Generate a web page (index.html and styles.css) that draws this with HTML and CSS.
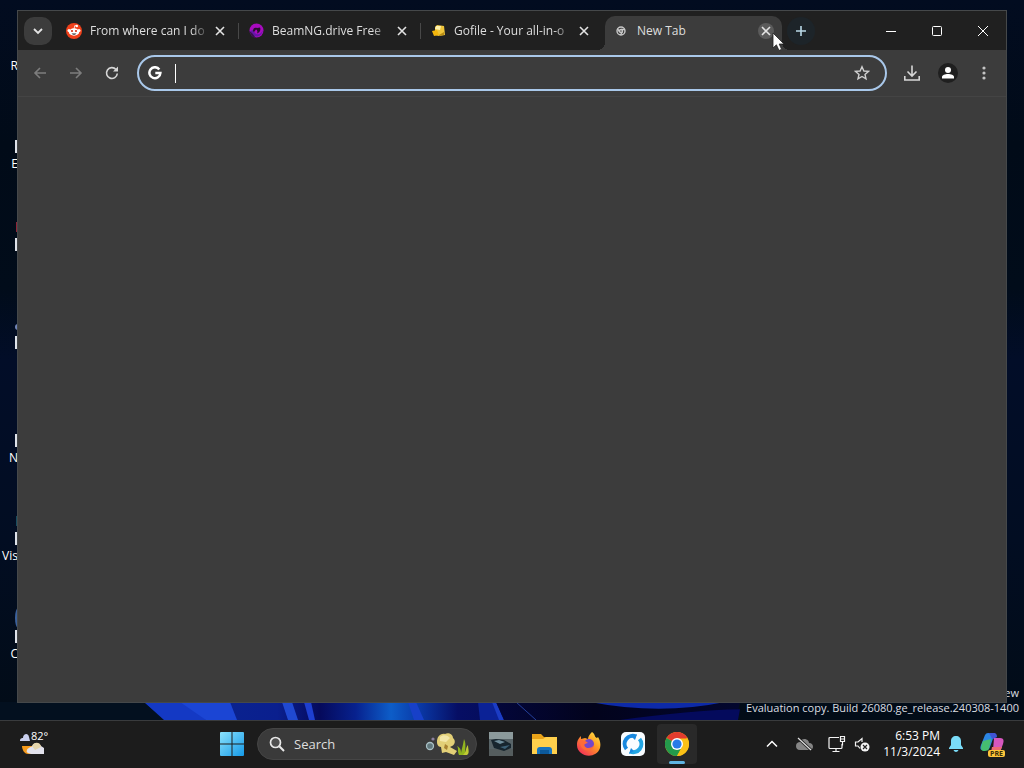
FILE: index.html
```
<!DOCTYPE html>
<html lang="en">
<head>
<meta charset="UTF-8">
<title>New Tab</title>
<meta name="viewport" content="width=device-width, initial-scale=1.0">
<link rel="stylesheet" href="styles.css">
</head>
<body>
<main class="desktop">
  <!-- Wallpaper bloom -->
  <svg class="wallpaper" viewBox="0 0 1024 20" preserveAspectRatio="none" aria-hidden="true">
    <defs>
      <linearGradient id="bloom" gradientUnits="userSpaceOnUse" x1="144" x2="536" y1="0" y2="0">
        <stop offset="0" stop-color="#0a2790"/>
        <stop offset=".34" stop-color="#0a1f8e"/>
        <stop offset=".45" stop-color="#050a5c"/>
        <stop offset=".54" stop-color="#07218e"/>
        <stop offset=".63" stop-color="#0d5dc8"/>
        <stop offset=".7" stop-color="#0a3aa8"/>
        <stop offset=".8" stop-color="#060e64"/>
        <stop offset="1" stop-color="#040a50"/>
      </linearGradient>
      <linearGradient id="petal">
        <stop offset="0" stop-color="#03063a"/>
        <stop offset=".4" stop-color="#02031c"/>
        <stop offset="1" stop-color="#02062e"/>
      </linearGradient>
    </defs>
    <path d="M0 0H146L166 20H0z" fill="#03101f"/>
    <path d="M144 0H520L536 20H166z" fill="url(#bloom)"/>
    <path d="M144 0H182L200 10L206 20H164z" fill="#1439c4"/>
    <path d="M180 0H230L237 20H206z" fill="#1b45d4"/>
    <path d="M282 0H292L298 20H288z" fill="#2049d2"/>
    <path d="M304 0H311L315 20H309z" fill="#1e3fd0"/>
    <path d="M408 0H416L424 20H414z" fill="#1740c8"/>
    <path d="M478 0H494L502 20H480z" fill="#0b2296"/>
    <path d="M492 0H496L504 20H499z" fill="#1b3cc4"/>
    <path d="M496 0H740L736 20H504z" fill="url(#petal)"/>
    <path d="M516 0L536 20" stroke="#2743a0" fill="none"/>
    <path d="M590 0H725Q660 15 590 0z" fill="#0d2aa8"/>
    <path d="M620 20Q690 9 740 8L738 20z" fill="#040a5c"/>
  </svg>

  <!-- Desktop shortcuts -->
  <ul class="shortcuts">
    <li><i></i><span>R</span></li>
    <li><i></i><span>E</span></li>
    <li class="red"><i></i></li>
    <li class="blue"><i></i></li>
    <li><i></i><span>N</span></li>
    <li class="teal"><i></i><span>Vis</span></li>
    <li class="disc"><i></i><span>C</span></li>
  </ul>

  <p class="watermark">ew<br>Evaluation copy. Build 26080.ge_release.240308-1400</p>

  <!-- Browser window -->
  <section class="window" aria-label="Browser">
    <header class="tabstrip">
      <button class="tab-search" aria-label="Search tabs">
        <svg width="12" height="12" viewBox="0 0 12 12"><path d="M2 4l4 4 4-4" fill="none" stroke="#e3e3e3" stroke-width="1.800"/></svg>
      </button>
      <div class="tabs">
        <div class="tab">
          <svg width="16" height="16" viewBox="0 0 16 16"><circle cx="8" cy="8" r="8" fill="#f0401a"/><circle cx="3" cy="7.500" r="1.500" fill="#fff"/><circle cx="13" cy="7.500" r="1.500" fill="#fff"/><circle cx="10.800" cy="3" r="1.200" fill="#fff"/><path d="M8 6l.8-3.400 2 .4" stroke="#fff" fill="none" stroke-width=".8"/><ellipse cx="8" cy="9" rx="5.200" ry="3.700" fill="#fff"/><circle cx="6" cy="8" r="1.100" fill="#d73012"/><circle cx="10" cy="8" r="1.100" fill="#d73012"/><path d="M5.500 10.400h5Q8 13 5.500 10.400z" fill="#222"/></svg>
          <a href="#reddit" class="fade">From where can I do</a>
          <button class="close" aria-label="Close tab"><svg width="10" height="10" viewBox="0 0 10 10"><path d="M1 1l8 8M9 1L1 9"/></svg></button>
        </div>
        <div class="tab">
          <svg width="16" height="16" viewBox="0 0 16 16"><circle cx="8.500" cy="7.500" r="7" fill="#a80bc0"/><path d="M2 8c0 6 11 9 13-1-1 3-5 6-8 3l-2-3z" fill="#6616a8"/><path d="M5 8C5 5 7 4 9 5l3-.5c1 2 0 5-3 6 1-2 0-4-1-4L6 9z" fill="#25102c"/><path d="M1 8l3 2 4 5-4-1z" fill="#38124e"/></svg>
          <a href="#beamng" class="fade">BeamNG.drive Free</a>
          <button class="close" aria-label="Close tab"><svg width="10" height="10" viewBox="0 0 10 10"><path d="M1 1l8 8M9 1L1 9"/></svg></button>
        </div>
        <div class="tab">
          <svg width="16" height="16" viewBox="0 0 16 16"><path d="M5 4l2-2 7 1 1 9-6 1-4-1z" fill="#efc53a"/><path d="M6 3h5l-1 4-5-1z" fill="#fff2ae"/><path d="M2 8l5-1 2 5-5 1z" fill="#f4b60c"/><path d="M9 12l5-3v3l-5 1z" fill="#b88c14"/></svg>
          <a href="#gofile" class="fade">Gofile - Your all-in-o</a>
          <button class="close" aria-label="Close tab"><svg width="10" height="10" viewBox="0 0 10 10"><path d="M1 1l8 8M9 1L1 9"/></svg></button>
        </div>
        <div class="tab active">
          <svg width="16" height="16" viewBox="0 0 16 16"><g fill="none" stroke="#c9c9c9" stroke-width="1.400"><circle cx="8" cy="8" r="4"/><circle cx="8" cy="8" r="1.500"/><path d="M8 6.500h4M6.500 9L4.500 5.500M9.300 9L7.500 12"/></g></svg>
          <a href="#newtab">New Tab</a>
          <button class="close" aria-label="Close tab"><svg width="10" height="10" viewBox="0 0 10 10"><path d="M1 1l8 8M9 1L1 9"/></svg></button>
        </div>
      </div>
      <button class="new-tab" aria-label="New tab"><svg width="12" height="12" viewBox="0 0 12 12"><path d="M6 1v10M1 6h10" stroke="#b9d8e6" stroke-width="1.600"/></svg></button>
      <div class="caption">
        <button aria-label="Minimize"><svg width="12" height="12" viewBox="0 0 12 12"><path d="M1 6.500h10"/></svg></button>
        <button aria-label="Maximize"><svg width="12" height="12" viewBox="0 0 12 12"><rect x="1.500" y="1.500" width="9" height="9" rx="1"/></svg></button>
        <button aria-label="Close"><svg width="12" height="12" viewBox="0 0 12 12"><path d="M1 1l10 10M11 1L1 11"/></svg></button>
      </div>
    </header>

    <div class="toolbar">
      <button class="tool dim" aria-label="Back"><svg width="16" height="16" viewBox="0 0 16 16"><path d="M14 8H3M8 3L3 8l5 5"/></svg></button>
      <button class="tool dim" aria-label="Forward"><svg width="16" height="16" viewBox="0 0 16 16"><path d="M2 8h11M8 3l5 5-5 5"/></svg></button>
      <button class="tool" aria-label="Reload"><svg width="16" height="16" viewBox="0 0 16 16"><path d="M13.300 8.500A5.400 5.400 0 1 1 12 4.500"/><path d="M14 1.500v5H9z" fill="#d6d6d6" stroke="none"/></svg></button>
      <div class="omnibox">
        <svg width="14" height="14" viewBox="0 0 14 14" aria-hidden="true"><path d="M11.300 3.400A5.500 5.500 0 1 0 12.400 7H7.300" fill="none" stroke="#fff" stroke-width="2.500"/></svg>
        <span class="caret"></span>
        <input type="text" aria-label="Address and search bar">
        <button class="star" aria-label="Bookmark this tab"><svg width="16" height="16" viewBox="0 0 16 16"><path d="M8 1.800l1.900 4.200 4.500.4-3.400 3 1 4.500L8 11.500l-4 2.400 1-4.500-3.400-3L6.100 6z" fill="none" stroke="#d0d0d0" stroke-width="1.400"/></svg></button>
      </div>
      <button class="tool" aria-label="Downloads"><svg width="18" height="18" viewBox="0 0 18 18"><path d="M9 1.500v10M4.500 7.500L9 12l4.500-4.500M1.800 12v4h14.400v-4"/></svg></button>
      <button class="tool" aria-label="Profile"><svg width="20" height="20" viewBox="0 0 20 20"><circle cx="10" cy="10" r="10" fill="#1f1f1f" stroke="none"/><circle cx="10" cy="7" r="3" fill="#fff" stroke="none"/><path d="M4 15.500v-1.500c0-4 12-4 12 0v1.500z" fill="#fff" stroke="none"/></svg></button>
      <button class="tool" aria-label="Menu"><svg width="16" height="16" viewBox="0 0 16 16"><g fill="#c4c4c4" stroke="none"><circle cx="8" cy="3" r="1.600"/><circle cx="8" cy="8" r="1.600"/><circle cx="8" cy="13" r="1.600"/></g></svg></button>
    </div>
    <div class="page"></div>
  </section>

  <svg class="pointer" width="13" height="20" viewBox="0 0 13 20" aria-hidden="true"><path d="M1 1v15l3.400-3.200L7 18.500l2.600-1.200L7.200 12H12z" fill="#fff" stroke="#222" stroke-width=".8"/></svg>
</main>

<footer class="taskbar">
  <button class="weather" aria-label="Weather">
    <svg width="28" height="26" viewBox="0 0 28 26"><path d="M0 10c0-3 2-3 3-3 0-4 5-6 6-1l1 4z" fill="#c9cfee"/><path d="M2 15h11l3 8H8c-4 0-6-5-6-8z" fill="#f59a1c"/><path d="M7 19c1-3 4-2 6-5 1-3 7-2 8 1l3 2v6H11c-4-1-5-2-4-4z" fill="#e2e2ec"/><path d="M12 15c2-5 9-4 9 1l-6 3z" fill="#e5d5ab"/></svg>
    <span>82°</span>
  </button>

  <nav class="apps">
    <button class="app" aria-label="Start"><svg width="24" height="24" viewBox="0 0 24 24"><defs><linearGradient id="win" x2="1" y2="1"><stop stop-color="#8be2fc"/><stop offset="1" stop-color="#159ae8"/></linearGradient></defs><path d="M0 1q0-1 1-1h10.500v11.500H0zM12.500 0H23q1 0 1 1v10.500H12.500zM0 12.500h11.500V24H1q-1 0-1-1zM12.500 12.500H24V23q0 1-1 1H12.500z" fill="url(#win)"/></svg></button>
    <label class="search">
      <svg width="16" height="16" viewBox="0 0 16 16"><circle cx="6.500" cy="6.500" r="5" fill="#505050" stroke="#e8e8e8" stroke-width="1.700"/><path d="M10.300 10.300L15 15" stroke="#e8e8e8" stroke-width="2"/></svg>
      <input type="search" placeholder="Search" aria-label="Search">
      <svg width="44" height="28" viewBox="0 0 44 28"><circle cx="5" cy="16" r="3.500" fill="#60777c" stroke="#a9c0c5" stroke-width="1.300"/><circle cx="8" cy="9" r="1.600" fill="#8a7f9d"/><path d="M12 12c0-5 3-9 8-8 3-2 8 0 8 4 3 2 2 7-1 8l-2 1 7 4-3 4-8-3-4 1-1-6c-3 0-4-3-4-5z" fill="#e2cf77"/><path d="M15 7c3-3 8-2 10 1l-4 4-6-1z" fill="#f3e7a8"/><path d="M20 14l3 2-1 4-3-2z" fill="#a78232"/><path d="M34 25c-2-4 0-6-2-9 4 2 4 5 4 7 1-5 2-8 3-14 3 6 0 11 2 16z" fill="#91b51e"/><path d="M38 25c4-3 2-7 5-10 0 4 2 8-1 10z" fill="#c0cc33"/></svg>
    </label>
    <button class="app" aria-label="Game"><svg width="24" height="24" viewBox="0 0 24 24"><path d="M0 0h24v24H0z" fill="#586468"/><path d="M0 0h24v7H0z" fill="#8b999b"/><path d="M0 17h24v7H0z" fill="#555d5e"/><path d="M2 8l5-1 8 1 7 4v4l-7 3-10-3z" fill="#17252e"/><path d="M5 9l5-1 6 2-5 2z" fill="#6f8d9b"/><path d="M11 15l10-2-5 4z" fill="#3c6076"/></svg></button>
    <button class="app" aria-label="File Explorer"><svg width="26" height="24" viewBox="0 0 26 24"><path d="M0 2h9l3 3h13v17H0z" fill="#e9a319"/><path d="M0 7h11l3-2h11v17H0z" fill="#ffd04c"/><path d="M5 22v-4q0-3 3-3h9q3 0 3 3v4z" fill="#1774bf"/><path d="M8 18h9v4H8z" fill="#0c599b"/></svg></button>
    <button class="app" aria-label="Firefox"><svg width="24" height="24" viewBox="0 0 24 24"><defs><linearGradient id="fox" x1="1" y1="0" x2=".2" y2="1"><stop stop-color="#fff04d"/><stop offset=".45" stop-color="#ff9c22"/><stop offset="1" stop-color="#f22c5a"/></linearGradient></defs><path d="M15 0c4 3 2 5 5 6l1-1c2 3 3 7 2 11-4 12-23 9-23-3 0-5 2-7 4-9v3l4-1 3 1c0-3 2-5 4-7z" fill="url(#fox)"/><circle cx="12" cy="12" r="5" fill="#7447c9"/><path d="M3 8c4 0 6 1 8 3-2 0-3 1-4 2 2 5 8 3 10 0-1 8-15 8-14-5z" fill="#ff6b37"/></svg></button>
    <button class="app" aria-label="Rustdesk"><svg width="24" height="24" viewBox="0 0 24 24"><rect width="24" height="24" rx="5" fill="#f8fcff"/><g fill="none" stroke-width="4"><path d="M5.500 17A8 8 0 0 1 15 4.600" stroke="#1888df"/><path d="M18.500 7A8 8 0 0 1 9 19.400" stroke="#21a5e4"/></g><path d="M16 2l-2 6-3-3zM8 22l2-6 3 3z" fill="#1888df"/></svg></button>
    <button class="app running" aria-label="Google Chrome"><svg width="24" height="24" viewBox="0 0 24 24"><circle cx="12" cy="12" r="12" fill="#fbc116"/><path d="M12 12L1.600 6A12 12 0 0 1 22.400 6z" fill="#e33b2e"/><path d="M1.600 6A12 12 0 0 0 12 24l5-9-5-3z" fill="#249a4b"/><path d="M12 6.500h10.700A12 12 0 0 1 12 24l5-9z" fill="#fbc116"/><circle cx="12" cy="12" r="6" fill="#fff"/><circle cx="12" cy="12" r="4.600" fill="#287be8"/></svg></button>
  </nav>

  <div class="tray">
    <button aria-label="Show hidden icons"><svg width="12" height="12" viewBox="0 0 12 12"><path d="M1 8.500l5-5 5 5" fill="none" stroke="#fff" stroke-width="1.500"/></svg></button>
    <button aria-label="OneDrive"><svg width="18" height="16" viewBox="0 0 18 16"><path d="M1 10c0-3 2-4 4-4 2-5 9-3 9 1 3 0 4 2 4 4s-2 3-3 3H5c-3 0-4-2-4-4z" fill="#858585"/><path d="M3 2l13 12" stroke="#1c1c1c" stroke-width="3"/><path d="M3 2l13 12" stroke="#e0e0e0" stroke-width="1.200"/></svg></button>
    <button class="status" aria-label="Network and volume">
      <svg width="18" height="18" viewBox="0 0 18 18" fill="none" stroke="#f3f3f3" stroke-width="1.200"><path d="M11 2.500H2q-1 0-1 1v9q0 1 1 1h11q1 0 1-1V9M4.500 16.500h7M8 13.500v3M12.500 1.500h4v5h-4zM14.500 6.500v4M12.500 4h4"/></svg>
      <svg width="16" height="16" viewBox="0 0 16 16"><path d="M6 12.500L4 10H1.500V6H4l4-3.500V6" fill="none" stroke="#f3f3f3" stroke-width="1.200"/><circle cx="11" cy="11" r="4.500" fill="#f3f3f3"/><path d="M9 9l4 4M13 9l-4 4" stroke="#222" stroke-width="1.200"/></svg>
    </button>
    <button class="clock"><time>6:53 PM</time><time>11/3/2024</time></button>
    <button aria-label="Notifications"><svg width="14" height="16" viewBox="0 0 14 16"><path d="M7 0c3 0 5 2 5 5v4l2 3v1H0v-1l2-3V5c0-3 2-5 5-5zM4.500 14h5c-1 2.500-4 2.500-5 0z" fill="#7adcf8"/></svg></button>
    <button class="copilot" aria-label="Copilot">
      <svg width="24" height="22" viewBox="0 0 24 22"><path d="M5 2q1-2 3-2h7l-5 14q-1 3-3 3H3c-3 0-3-2-2-5z" fill="#2b86e4"/><path d="M3 8l8-2-2 10q-1 2-4 2H3c-3-1-2-5 0-10z" fill="#45be70"/><path d="M8 0h6q3 0 3 4l-4 2c-2-1-3-6-5-6z" fill="#4054d6"/><path d="M14 5h6q5 0 3 6l-3 8q-1 3-4 3H9q3 0 4-5z" fill="#d657bf"/><path d="M12 14h10l-2 5q-1 3-4 3H9q2-2 3-8z" fill="#ed6b72"/></svg>
      <span>PRE</span>
    </button>
  </div>
</footer>
</body>
</html>
```

FILE: styles.css
```
* {
  box-sizing: border-box;
}
body {
  margin: 0;
  min-height: 100vh;
  display: flex;
  flex-direction: column;
  font-family: "Open Sans", "Noto Sans", sans-serif;
  font-size: 12px;
  color: #fff;
  background: #1c1c1c;
}
button {
  display: flex;
  align-items: center;
  justify-content: center;
  padding: 0;
  border: none;
  background: none;
  color: inherit;
  font: inherit;
}
input {
  flex: 1;
  min-width: 0;
  padding: 0;
  border: none;
  outline: none;
  background: none;
  color: #fff;
  font: inherit;
}
svg {
  display: block;
  flex: none;
}

/* Desktop */
.desktop {
  position: relative;
  flex: 1;
  overflow: hidden;
  background: linear-gradient(#020c20, #010b18 20%, #010c1a 40%, #020d28 50%, #020d22 75%, #020c17);
}
.wallpaper {
  position: absolute;
  left: 0;
  bottom: 0;
  width: 100%;
  height: 18px;
}
.shortcuts {
  width: 18px;
  margin: 0;
  padding: 0;
  list-style: none;
}
.shortcuts li {
  display: flex;
  flex-direction: column;
  align-items: flex-end;
  justify-content: flex-end;
  height: 98px;
}
.shortcuts li:first-child {
  height: 75px;
}
.shortcuts i {
  width: 3px;
  height: 13px;
  margin-bottom: 2px;
  background: #dfe3ea;
}
.shortcuts span {
  line-height: 18px;
}
.shortcuts li:first-child i {
  visibility: hidden;
}
.shortcuts .red,
.shortcuts .blue {
  padding-bottom: 18px;
}
.shortcuts li::before {
  content: "";
  width: 2px;
  height: 10px;
  margin-bottom: 6px;
}
.shortcuts .red::before {
  background: #8d2438;
}
.shortcuts .blue::before {
  background: #7185b8;
  width: 3px;
  height: 6px;
  border-radius: 3px 0 0 3px;
}
.shortcuts .teal::before {
  background: #174c5e;
}
.shortcuts .disc::before {
  width: 3px;
  height: 20px;
  margin-bottom: 2px;
  border-radius: 3px 0 0 3px / 10px 0 0 10px;
  background: #3b619c;
}
.watermark {
  position: absolute;
  right: 5px;
  bottom: 5px;
  margin: 0;
  font-size: 11px;
  line-height: 15px;
  text-align: right;
  color: #dadde0;
}

/* Browser window */
.window {
  position: absolute;
  inset: 10px 17px 17px;
  display: flex;
  flex-direction: column;
  border: 1px solid #45484a;
  background: #3c3c3c;
}
.tabstrip {
  display: flex;
  align-items: center;
  height: 39px;
  padding-left: 6px;
  background: #202020;
}
.tab-search {
  width: 28px;
  height: 28px;
  border-radius: 10px;
  background: #3c3c3c;
}
.tabs {
  display: flex;
  align-self: flex-end;
  gap: 5px;
  margin-left: 7px;
}
.tab {
  position: relative;
  display: flex;
  align-items: center;
  gap: 8px;
  width: 177px;
  height: 34px;
  padding: 0 8px 5px 7px;
  border-radius: 10px 10px 0 0;
}
.tab:not(.active)::after {
  content: "";
  position: absolute;
  right: -3px;
  top: 7px;
  width: 1px;
  height: 16px;
  background: #484848;
}
.tab:nth-child(3)::after {
  display: none;
}
.tab a {
  flex: 1;
  white-space: nowrap;
  color: #dedede;
  text-decoration: none;
}
.tab .fade {
  -webkit-mask-image: linear-gradient(to right, #000 88%, transparent 104%);
  mask-image: linear-gradient(to right, #000 88%, transparent 104%);
}
.tab.active {
  padding-left: 8px;
  background: #3c3c3c;
}
.tab.active::before {
  content: "";
  position: absolute;
  left: -8px;
  right: -8px;
  bottom: 0;
  height: 8px;
  background:
    radial-gradient(circle at 0 0, transparent 8px, #3c3c3c 8px) left / 8px 8px no-repeat,
    radial-gradient(circle at 100% 0, transparent 8px, #3c3c3c 8px) right / 8px 8px no-repeat;
}
.close {
  width: 16px;
  height: 16px;
  border-radius: 50%;
}
.close path {
  fill: none;
  stroke: #e3e3e3;
  stroke-width: 1.6;
}
.active .close {
  background: #5b5b5b;
}
.new-tab {
  width: 28px;
  height: 28px;
  margin-left: 5px;
  border-radius: 50%;
  background: #1d2429;
}
.caption {
  display: flex;
  align-self: stretch;
  margin-left: auto;
}
.caption button {
  width: 46px;
}
.caption svg {
  fill: none;
  stroke: #fff;
  stroke-width: 1;
}

/* Toolbar */
.toolbar {
  display: flex;
  align-items: center;
  height: 47px;
  padding: 0 4px;
  border-bottom: 1px solid #444;
}
.tool {
  width: 36px;
  height: 36px;
}
.tool svg {
  fill: none;
  stroke: #d6d6d6;
  stroke-width: 1.6;
}
.tool.dim svg {
  stroke: #7d7d7d;
}
.omnibox {
  flex: 1;
  display: flex;
  align-items: center;
  height: 36px;
  margin: 0 7px;
  padding: 0 15px 0 9px;
  border: 2px solid #a9c8ea;
  border-radius: 18px;
}
.caret {
  width: 1px;
  height: 19px;
  margin-left: 13px;
  background: #fff;
}
.page {
  flex: 1;
}
.pointer {
  position: absolute;
  left: 772px;
  top: 32px;
}

/* Taskbar */
.taskbar {
  display: flex;
  align-items: center;
  height: 48px;
  padding-bottom: 2px;
  border-top: 1px solid #393b3d;
  background: #1c1c1c;
}
.weather {
  position: relative;
  width: 210px;
  padding-left: 20px;
  justify-content: flex-start;
}
.weather span {
  position: absolute;
  left: 31px;
  top: -3px;
  font-size: 11px;
  line-height: 15px;
}
.apps {
  display: flex;
  align-items: center;
}
.app {
  position: relative;
  width: 44px;
  height: 40px;
}
.running::before {
  content: "";
  position: absolute;
  inset: 0 2px;
  z-index: -1;
  border-radius: 4px;
  background: #292929;
}
.running {
  z-index: 0;
}
.running::after {
  content: "";
  position: absolute;
  left: 14px;
  bottom: 0;
  width: 16px;
  height: 3px;
  border-radius: 2px;
  background: #5fb4e2;
}
.search {
  display: flex;
  align-items: center;
  gap: 9px;
  width: 220px;
  height: 32px;
  margin: 0 2px 0 3px;
  padding: 0 7px 0 11px;
  border: 1px solid #454545;
  border-radius: 16px;
  background: #3a3a3a;
  font-size: 13px;
}
.search input::placeholder {
  color: #dedede;
  opacity: 1;
}
.tray {
  display: flex;
  align-items: center;
  margin-left: auto;
  padding-right: 16px;
}
.tray button {
  min-width: 32px;
  height: 40px;
}
.tray .status {
  gap: 8px;
  padding: 0 8px;
}
.tray .clock {
  flex-direction: column;
  align-items: flex-end;
  padding-left: 5px;
  line-height: 16px;
}
.clock + button {
  margin-right: 4px;
}
.tray .copilot {
  position: relative;
}
.copilot span {
  position: absolute;
  right: 3px;
  bottom: 7px;
  padding: 0 2px;
  border-radius: 2px;
  background: #ffc53a;
  color: #3a2c08;
  font-size: 7px;
  font-weight: 700;
  line-height: 7px;
}
```
